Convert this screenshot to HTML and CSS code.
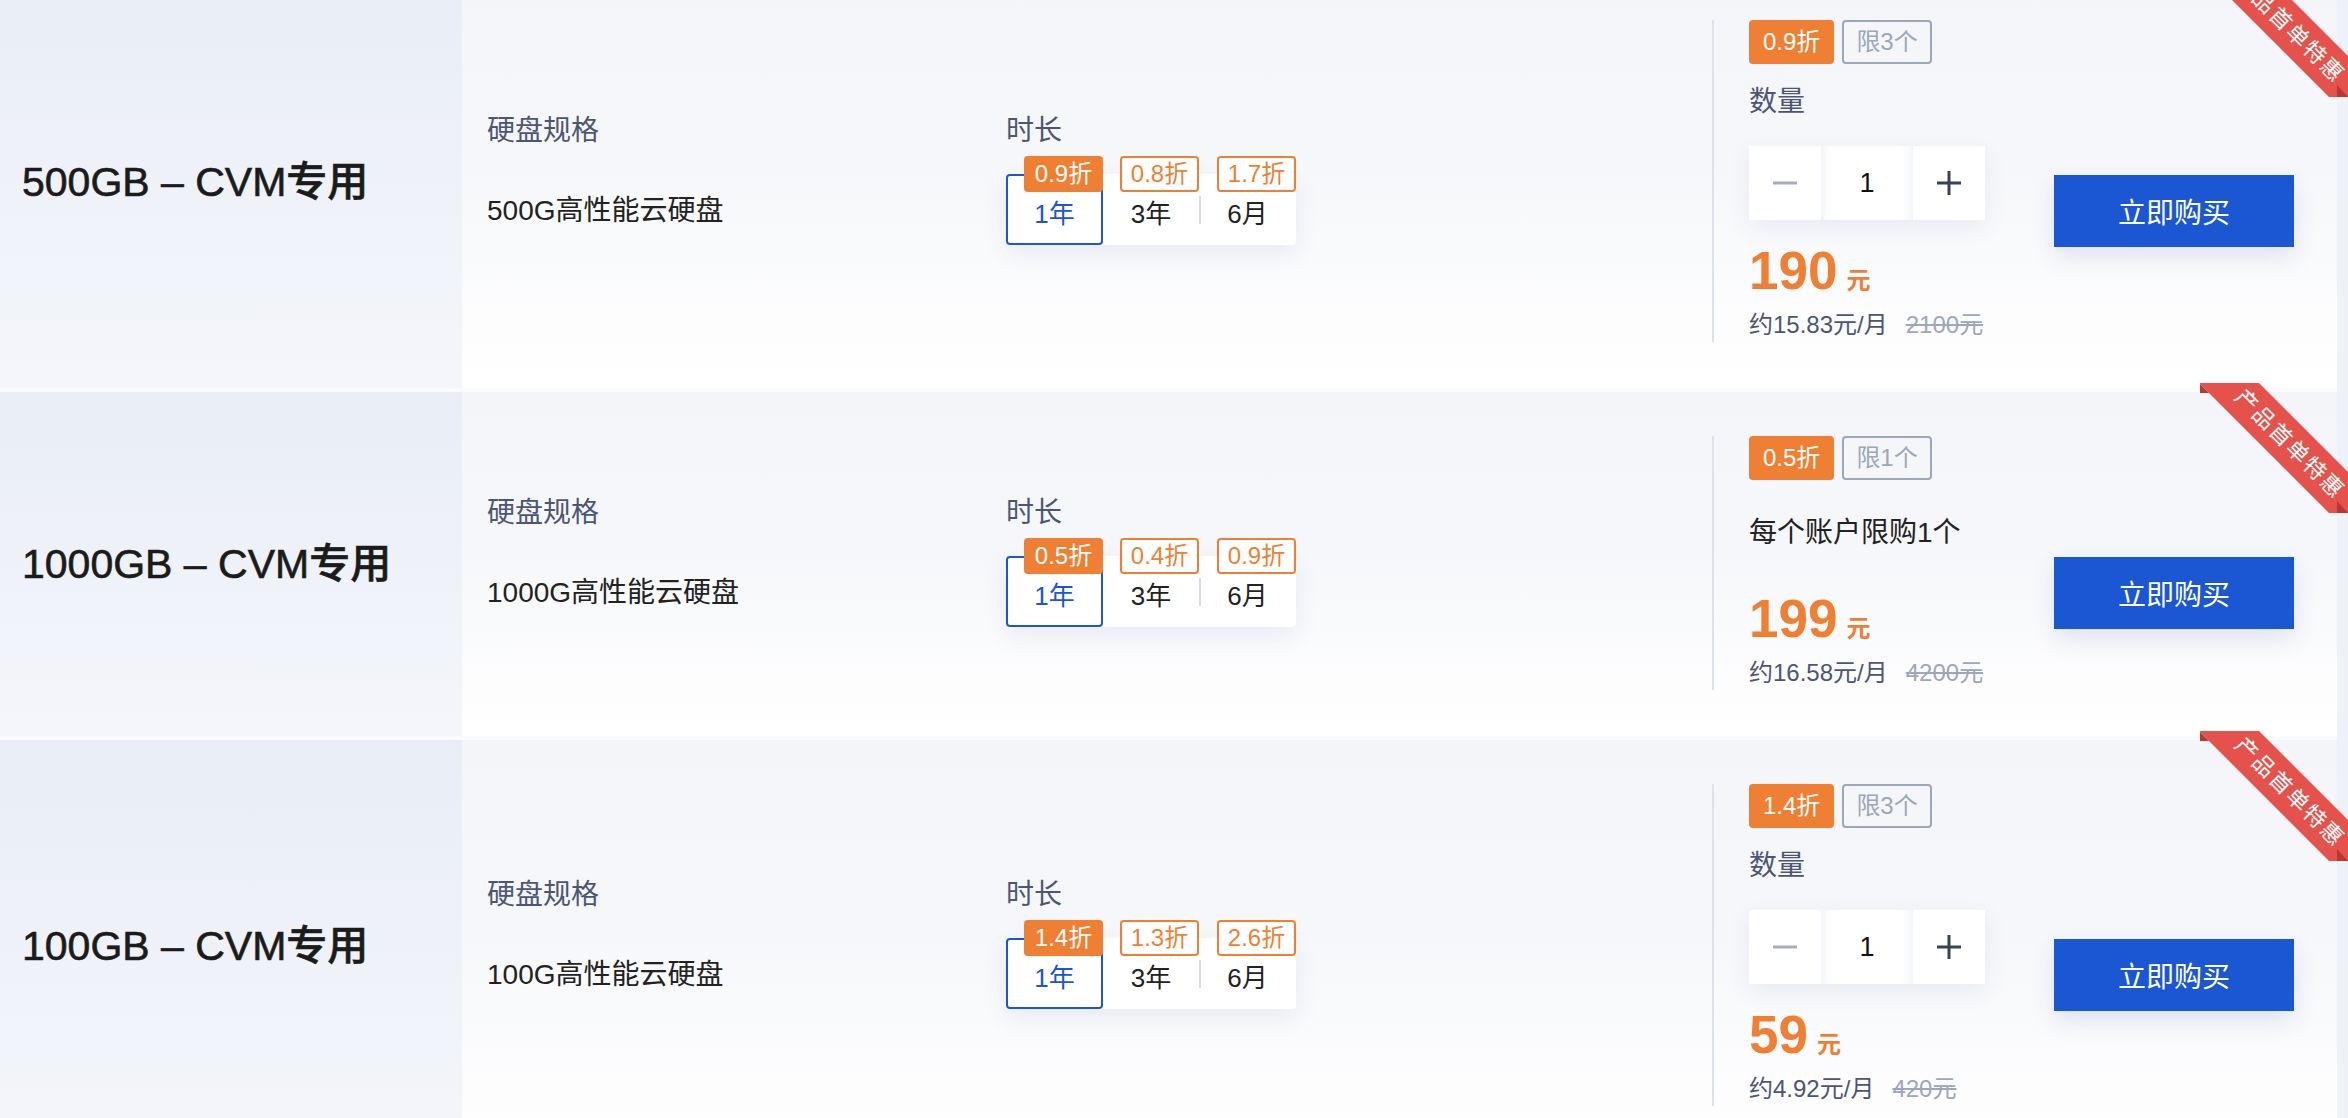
FILE: index.html
```html
<!DOCTYPE html>
<html lang="zh-CN">
<head>
<meta charset="utf-8">
<title>云硬盘</title>
<link rel="stylesheet" href="styles.css">
</head>
<body>
<div class="list">

  <div class="row">
    <div class="name">500GB – CVM专用</div>
    <div class="main">
      <div class="specs">
        <div class="specs-inner">
          <div class="field field-disk">
            <div class="label">硬盘规格</div>
            <div class="value">500G高性能云硬盘</div>
          </div>
          <div class="field">
            <div class="label">时长</div>
            <div class="tabs">
              <div class="tab active"><span class="disc filled">0.9折</span>1年</div>
              <div class="tab"><span class="disc">0.8折</span>3年</div>
              <div class="tab sep"><span class="disc">1.7折</span>6月</div>
            </div>
          </div>
        </div>
      </div>
      <div class="buy">
        <div class="info">
          <div class="tags"><span class="tag tag-disc">0.9折</span><span class="tag tag-limit">限3个</span></div>
          <div class="qty-label">数量</div>
          <div class="stepper">
            <div class="step"><svg width="26" height="26" viewBox="0 0 26 26"><path d="M1 13h24" stroke="#a3acc0" stroke-width="3"/></svg></div>
            <div class="step step-val">1</div>
            <div class="step"><svg width="26" height="26" viewBox="0 0 26 26"><path d="M1 13h24M13 1v24" stroke="#3a4256" stroke-width="3"/></svg></div>
          </div>
          <div class="price"><span class="price-num">190</span><span class="price-unit">元</span></div>
          <div class="sub">约15.83元/月<s>2100元</s></div>
        </div>
        <div class="action"><button class="btn">立即购买</button></div>
      </div>
      <div class="ribbon"><div class="ribbon-band"></div><div class="ribbon-fold fold-a"></div><div class="ribbon-fold fold-b"></div><span class="ribbon-text">产品首单特惠</span></div>
    </div>
  </div>

  <div class="row">
    <div class="name">1000GB – CVM专用</div>
    <div class="main">
      <div class="specs">
        <div class="specs-inner">
          <div class="field field-disk">
            <div class="label">硬盘规格</div>
            <div class="value">1000G高性能云硬盘</div>
          </div>
          <div class="field">
            <div class="label">时长</div>
            <div class="tabs">
              <div class="tab active"><span class="disc filled">0.5折</span>1年</div>
              <div class="tab"><span class="disc">0.4折</span>3年</div>
              <div class="tab sep"><span class="disc">0.9折</span>6月</div>
            </div>
          </div>
        </div>
      </div>
      <div class="buy">
        <div class="info">
          <div class="tags"><span class="tag tag-disc">0.5折</span><span class="tag tag-limit">限1个</span></div>
          <div class="limit-text">每个账户限购1个</div>
          <div class="price price-after-text"><span class="price-num">199</span><span class="price-unit">元</span></div>
          <div class="sub">约16.58元/月<s>4200元</s></div>
        </div>
        <div class="action"><button class="btn">立即购买</button></div>
      </div>
      <div class="ribbon"><div class="ribbon-band"></div><div class="ribbon-fold fold-a"></div><div class="ribbon-fold fold-b"></div><span class="ribbon-text">产品首单特惠</span></div>
    </div>
  </div>

  <div class="row">
    <div class="name">100GB – CVM专用</div>
    <div class="main">
      <div class="specs">
        <div class="specs-inner">
          <div class="field field-disk">
            <div class="label">硬盘规格</div>
            <div class="value">100G高性能云硬盘</div>
          </div>
          <div class="field">
            <div class="label">时长</div>
            <div class="tabs">
              <div class="tab active"><span class="disc filled">1.4折</span>1年</div>
              <div class="tab"><span class="disc">1.3折</span>3年</div>
              <div class="tab sep"><span class="disc">2.6折</span>6月</div>
            </div>
          </div>
        </div>
      </div>
      <div class="buy">
        <div class="info">
          <div class="tags"><span class="tag tag-disc">1.4折</span><span class="tag tag-limit">限3个</span></div>
          <div class="qty-label">数量</div>
          <div class="stepper">
            <div class="step"><svg width="26" height="26" viewBox="0 0 26 26"><path d="M1 13h24" stroke="#a3acc0" stroke-width="3"/></svg></div>
            <div class="step step-val">1</div>
            <div class="step"><svg width="26" height="26" viewBox="0 0 26 26"><path d="M1 13h24M13 1v24" stroke="#3a4256" stroke-width="3"/></svg></div>
          </div>
          <div class="price"><span class="price-num">59</span><span class="price-unit">元</span></div>
          <div class="sub">约4.92元/月<s>420元</s></div>
        </div>
        <div class="action"><button class="btn">立即购买</button></div>
      </div>
      <div class="ribbon"><div class="ribbon-band"></div><div class="ribbon-fold fold-a"></div><div class="ribbon-fold fold-b"></div><span class="ribbon-text">产品首单特惠</span></div>
    </div>
  </div>

</div>
</body>
</html>
```

FILE: styles.css
```css
* { box-sizing: border-box; margin: 0; padding: 0; }

html, body { height: 100%; overflow: hidden; }

body {
  background: #eef1f7;
  font-family: "Liberation Sans", "Noto Sans CJK SC", sans-serif;
  color: #222;
}

.list {
  width: 2337px;
  margin-top: -24px;
  display: flex;
  flex-direction: column;
  gap: 4px;
  background: #fafbfd;
}

.row {
  display: flex;
  position: relative;
}

.name {
  width: 462px;
  flex: none;
  display: flex;
  align-items: center;
  padding-left: 22px;
  padding-bottom: 8px;
  font-family: "Liberation Sans", "Noto Sans CJK SC", sans-serif;
  font-size: 41px;
  font-weight: 500;
  color: #1b1b1b;
  -webkit-text-stroke: 0.6px #1b1b1b;
  background: linear-gradient(180deg, #e9edf5 0%, #f4f6fb 100%);
}

.main {
  flex: 1;
  display: flex;
  position: relative;
  background: linear-gradient(180deg, #f3f5f8 0%, #f6f7fa 45%, #ffffff 100%);
}

.specs {
  flex: 1;
  display: flex;
  align-items: center;
  padding-left: 25px;
}

.specs-inner {
  display: flex;
  align-items: flex-start;
  margin-bottom: 8px;
}

.field-disk { width: 519px; }

.label {
  font-size: 28px;
  line-height: 40px;
  color: #4b5675;
}

.value {
  margin-top: 40px;
  font-size: 28px;
  line-height: 40px;
  color: #222;
}

.tabs {
  display: flex;
  margin-top: 23px;
  background: #fff;
  border-radius: 4px;
  box-shadow: 0 8px 24px rgba(40, 70, 130, 0.09);
}

.tab {
  position: relative;
  width: 97px;
  height: 71px;
  display: flex;
  align-items: center;
  justify-content: center;
  padding-top: 4px;
  font-size: 26px;
  color: #222;
}

.tab:nth-child(2) { width: 96px; }

.tab.active {
  color: #1a56d6;
  border-radius: 4px;
  box-shadow: inset 0 0 0 2px #1a56d6;
}

.tab.sep::before {
  content: "";
  position: absolute;
  left: 0;
  top: 22px;
  width: 2px;
  height: 28px;
  background: #d8dce4;
}

.disc {
  position: absolute;
  top: -18px;
  right: 0;
  width: 79px;
  height: 36px;
  border: 2px solid #ef7f32;
  border-radius: 4px;
  background: #fff;
  color: #ef7f32;
  font-size: 24px;
  line-height: 32px;
  text-align: center;
}

.disc.filled {
  background: #ef7f32;
  color: #fff;
}

.buy {
  width: 625px;
  flex: none;
  margin: 44px 0 46px;
  border-left: 2px solid #dde2ea;
  padding-left: 35px;
  padding-right: 43px;
  display: flex;
  justify-content: space-between;
  align-items: center;
}

.tags {
  display: flex;
  gap: 8px;
}

.tag {
  height: 44px;
  padding: 0 12px;
  border: 2px solid;
  border-radius: 4px;
  font-size: 24px;
  line-height: 40px;
}

.tag-disc {
  background: #ef7f32;
  border-color: #ef7f32;
  color: #fff;
}

.tag-limit {
  border-color: #9ca6bc;
  color: #9ca6bc;
}

.qty-label {
  margin-top: 18px;
  font-size: 28px;
  line-height: 40px;
  color: #4b5675;
}

.stepper {
  margin-top: 24px;
  display: flex;
  height: 74px;
  box-shadow: 0 8px 24px rgba(40, 70, 130, 0.08);
}

.step {
  position: relative;
  width: 72px;
  display: flex;
  align-items: center;
  justify-content: center;
  background: #fff;
}

.step-val {
  width: 92px;
  font-size: 27px;
  color: #111;
  box-shadow: inset 10px 0 12px -10px rgba(40, 70, 130, 0.12), inset -10px 0 12px -10px rgba(40, 70, 130, 0.12);
}

.limit-text {
  margin-top: 33px;
  font-size: 28px;
  line-height: 40px;
  color: #222;
}

.price {
  margin-top: 21px;
  display: flex;
  align-items: baseline;
  color: #ef7f32;
  font-weight: bold;
}

.price-after-text { margin-top: 36px; }

.price-num {
  font-size: 53px;
  line-height: 60px;
}

.price-unit {
  margin-left: 9px;
  font-size: 24px;
}

.sub {
  margin-top: 7px;
  font-size: 24px;
  line-height: 34px;
  color: #4b5675;
}

.sub s {
  margin-left: 18px;
  color: #9ca6bc;
}

.action { margin-top: 60px; }

.btn {
  display: block;
  width: 240px;
  height: 72px;
  border: none;
  background: #1b56d3;
  color: #fff;
  font-family: "Liberation Sans", "Noto Sans CJK SC", sans-serif;
  font-size: 28px;
  box-shadow: 0 10px 24px rgba(30, 60, 120, 0.12);
}

/* corner ribbon */
.ribbon {
  position: absolute;
  top: -9px;
  right: -11px;
  width: 148px;
  height: 130px;
  z-index: 2;
}

.ribbon-band {
  position: absolute;
  inset: 0;
  background: #e5524c;
  clip-path: polygon(0 0, 59px 0, 148px 89px, 148px 130px, 129px 130px, 0 1px);
}

.ribbon-fold {
  position: absolute;
  width: 11px;
  height: 10px;
  background: #b53a34;
}

.fold-a {
  left: 0;
  top: 0;
  clip-path: polygon(0 1px, 0 100%, 9px 100%);
}

.fold-b {
  right: 0;
  bottom: 0;
  height: 12px;
  clip-path: polygon(0 0, 100% 100%, 0 100%);
}

.ribbon-text {
  position: absolute;
  left: 16px;
  top: 48px;
  width: 144px;
  height: 24px;
  padding-left: 2px;
  transform: rotate(45deg);
  color: #fff;
  font-size: 22px;
  letter-spacing: 2px;
  line-height: 24px;
  text-align: center;
  white-space: nowrap;
}
```
